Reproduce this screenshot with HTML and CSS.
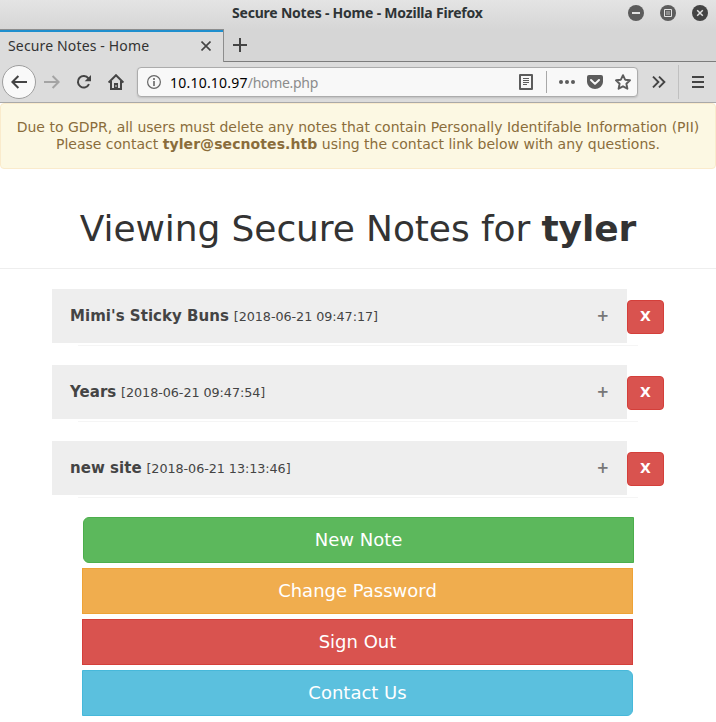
FILE: index.html
```html
<!DOCTYPE html>
<html lang="en">
<head>
<meta charset="utf-8">
<title>Secure Notes - Home</title>
<link rel="stylesheet" href="styles.css">
</head>
<body>
<header class="browser">
  <div class="titlebar">
    <span class="window-title">Secure Notes - Home - Mozilla Firefox</span>
    <div class="window-controls">
      <svg viewBox="0 0 16 16"><circle cx="8" cy="8" r="8" fill="#5c5c5c"/><path d="M4 8h8" stroke="#e2e2e2" stroke-width="2"/></svg>
      <svg viewBox="0 0 16 16"><circle cx="8" cy="8" r="8" fill="#5c5c5c"/><path d="M4.500 4.500h7v7h-7z" fill="none" stroke="#e2e2e2"/><path d="M6 6h4v4H6z" fill="#8b8b8b"/></svg>
      <svg viewBox="0 0 16 16"><circle cx="8" cy="8" r="8" fill="#444"/><path d="M5.200 5.200l5.600 5.600m0-5.600l-5.600 5.600" stroke="#e2e2e2" stroke-width="1.500"/></svg>
    </div>
  </div>
  <div class="tabs">
    <div class="tab">
      <span class="tab-title">Secure Notes - Home</span>
      <svg class="tab-close" viewBox="0 0 10 10"><path d="M.5.5l9 9m0-9l-9 9" fill="none" stroke="#444" stroke-width="1.600"/></svg>
    </div>
    <div class="tab-rest">
      <svg class="tab-new" viewBox="0 0 14 14"><path d="M7 0v14M0 7h14" stroke="#444" stroke-width="2"/></svg>
    </div>
  </div>
  <div class="toolbar">
    <div class="back"><svg class="icon" viewBox="0 0 16 16"><path d="M16 8H1.400M7.400 2L1.400 8l6 6" fill="none" stroke="#444" stroke-width="2"/></svg></div>
    <svg class="icon forward" viewBox="0 0 16 16"><path d="M0 8h14.600M8.600 2l6 6-6 6" fill="none" stroke="#a4a4a4" stroke-width="2"/></svg>
    <svg class="icon reload" viewBox="0 0 16 16"><path d="M13 10.200A5.800 5.800 0 1 1 12.400 4.300" fill="none" stroke="#444" stroke-width="2"/><path d="M15 1v6.300H8.700z" fill="#444"/></svg>
    <svg class="icon home" viewBox="0 0 16 16"><path d="M.6 8.500L8 1.200l7.400 7.300M3 7v8h10V7" fill="none" stroke="#444" stroke-width="2"/><path d="M6 15v-6h4v6" fill="#444"/><path d="M8 11v2" stroke="#ddd"/></svg>
    <div class="urlbar">
      <svg class="info" viewBox="0 0 14 14"><circle cx="7" cy="7" r="6.400" fill="none" stroke="#666" stroke-width="1.200"/><path d="M7 3v2M7 6v5" stroke="#666" stroke-width="1.600"/></svg>
      <span class="url">10.10.10.97<span class="path">/home.php</span></span>
      <svg class="icon reader" viewBox="0 0 16 16"><path d="M2 1h12v14H2z" fill="none" stroke="#5c5c5c" stroke-width="2" stroke-linejoin="round"/><path d="M5 4.500h6M5 6.500h6M5 8.500h6M5 10.500h4" stroke="#5c5c5c"/></svg>
      <i class="url-separator"></i>
      <svg class="icon dots" viewBox="0 0 16 16" fill="#5c5c5c"><circle cx="2" cy="8" r="2"/><circle cx="8" cy="8" r="2"/><circle cx="14" cy="8" r="2"/></svg>
      <svg class="icon pocket" viewBox="0 0 16 16"><path d="M2 1h12a2 2 0 0 1 2 2v4.500C16 12 12 15 8 15S0 12 0 7.500V3a2 2 0 0 1 2-2z" fill="#5c5c5c"/><path d="M4 6l4 3.900L12 6" fill="none" stroke="#f8f8f8" stroke-width="2" stroke-linecap="round" stroke-linejoin="round"/></svg>
      <svg class="icon star" viewBox="0 0 16 16"><path d="M8 1.200l2.100 4.500 4.900.6-3.600 3.400 1 5L8 12.300l-4.400 2.400 1-5L1 6.300l4.900-.6z" fill="none" stroke="#5c5c5c" stroke-width="1.900" stroke-linejoin="round"/></svg>
    </div>
    <svg class="overflow" viewBox="0 0 14 12"><path d="M1 .6L6.400 6 1 11.400M7 .6L12.400 6 7 11.400" fill="none" stroke="#444" stroke-width="1.900"/></svg>
    <i class="toolbar-separator"></i>
    <svg class="menu" viewBox="0 0 12 12"><path d="M0 1h12M0 6h12M0 11h12" stroke="#444" stroke-width="2"/></svg>
  </div>
</header>
<main>
  <div class="alert">Due to GDPR, all users must delete any notes that contain Personally Identifable Information (PII)<br>Please contact <strong>tyler@secnotes.htb</strong> using the contact link below with any questions.</div>
  <h1>Viewing Secure Notes for <b>tyler</b></h1>
  <section class="notes">
    <article class="note">
      <div class="note-row"><div class="accordion"><span><b>Mimi's Sticky Buns</b> <small>[2018-06-21 09:47:17]</small></span><span class="plus">+</span></div><button class="delete">X</button></div>
      <div class="rule"></div>
    </article>
    <article class="note">
      <div class="note-row"><div class="accordion"><span><b>Years</b> <small>[2018-06-21 09:47:54]</small></span><span class="plus">+</span></div><button class="delete">X</button></div>
      <div class="rule"></div>
    </article>
    <article class="note">
      <div class="note-row"><div class="accordion"><span><b>new site</b> <small>[2018-06-21 13:13:46]</small></span><span class="plus">+</span></div><button class="delete">X</button></div>
      <div class="rule"></div>
    </article>
  </section>
  <nav class="actions">
    <a class="btn success">New Note</a>
    <a class="btn warning">Change Password</a>
    <a class="btn danger">Sign Out</a>
    <a class="btn info-btn">Contact Us</a>
  </nav>
</main>
</body>
</html>
```
FILE: styles.css
```css
* { box-sizing: border-box; }
html, body { margin: 0; }
body {
  height: 722px;
  overflow: hidden;
  background: #fff;
  color: #333;
  font: 14px/17px "DejaVu Sans", sans-serif;
}
svg { display: block; flex: none; }

.browser {
  height: 103px;
  border-bottom: 1px solid #a9a9a9;
  background: linear-gradient(#e4e4e4, #d6d6d6 29px);
  font-family: "Noto Sans", sans-serif;
}
.titlebar {
  display: grid;
  grid-template-columns: 232px 1fr auto;
  align-items: center;
  height: 29px;
  padding-right: 8px;
}
.window-title {
  grid-column: 2;
  padding-bottom: 4px;
  color: #2e3436;
  font-size: 14px;
  font-weight: 700;
  letter-spacing: -0.21px;
  white-space: nowrap;
}
.window-controls { display: flex; gap: 16px; padding-bottom: 3px; }
.window-controls svg { width: 16px; height: 16px; }

.tabs { display: flex; height: 33px; }
.tab {
  display: flex;
  align-items: center;
  justify-content: space-between;
  width: 224px;
  padding: 0 12px 0 8px;
  border-top: 1px solid #8d8d8d;
  border-right: 1px solid #8d8d8d;
  background: linear-gradient(#1f8fce 2px, #dcdcdc 2px);
}
.tab-title { padding-bottom: 1px; color: #333; font-size: 14px; letter-spacing: 0.15px; }
.tab-close { width: 10px; height: 10px; }
.tab-rest { flex: 1; padding: 9px 0 0 9px; border-bottom: 1px solid #7d7d7d; }
.tab-new { width: 14px; height: 14px; }

.toolbar { display: flex; align-items: center; height: 40px; background: #dcdcdc; }
.icon { width: 16px; height: 16px; }
.back {
  display: grid;
  place-items: center;
  width: 34px;
  height: 34px;
  margin-left: 2px;
  border: 1px solid #9e9e9e;
  border-radius: 50%;
  background: #f9f9f9;
}
.forward { margin-left: 8px; }
.reload { margin-left: 16px; }
.home { margin-left: 16px; }
.urlbar {
  display: flex;
  align-items: center;
  width: 501px;
  height: 30px;
  margin-left: 13px;
  padding: 0 6px 0 9px;
  border: 1px solid #acacac;
  border-radius: 4px;
  background: #f8f8f8;
  box-shadow: 0 1px 2px #0002;
}
.info { width: 14px; height: 14px; }
.url { flex: 1; margin-left: 9px; color: #000; font-size: 14px; letter-spacing: 0.22px; white-space: nowrap; }
.path { color: #8c8c8c; letter-spacing: -0.3px; }
.url-separator { width: 1px; height: 22px; margin: 0 12px; background: #a8a8a8; }
.pocket, .star { margin-left: 12px; }
.overflow { width: 14px; height: 12px; margin-left: 14px; }
.toolbar-separator { width: 1px; height: 34px; margin: 0 13px 0 12px; background: #c0c0c0; }
.menu { width: 12px; height: 12px; }

.alert {
  height: 66px;
  padding: 15px 0;
  border: 1px solid #faebcc;
  border-radius: 4px;
  background: #fcf8e3;
  color: #8a6d3b;
  text-align: center;
  white-space: nowrap;
}
.alert strong { letter-spacing: 0.08px; }
h1 {
  height: 100px;
  margin: 0;
  padding-top: 40px;
  border-bottom: 1px solid #eee;
  font-size: 36px;
  font-weight: 400;
  letter-spacing: -0.1px;
  line-height: 40px;
  text-align: center;
}
.notes { padding: 20px 52px 0; }
.note { height: 76px; }
.note-row { display: flex; align-items: center; }
.accordion {
  display: flex;
  align-items: center;
  justify-content: space-between;
  width: 575px;
  height: 54px;
  padding: 0 18px;
  background: #eee;
  color: #444;
  font-size: 15px;
}
.accordion b { letter-spacing: 0.04px; }
small { font-size: 12.75px; letter-spacing: -0.06px; }
.plus { padding-top: 1px; color: #777; font-size: 15px; font-weight: 700; }
.delete {
  width: 37px;
  height: 34px;
  margin-top: 2px;
  padding: 0 0 2px;
  border: 1px solid #d43f3a;
  border-radius: 4px;
  background: #d9534f;
  color: #fff;
  font: 700 14px/20px "DejaVu Sans", sans-serif;
}
.rule { width: 560px; height: 1px; margin: 2px 0 0 26px; background: #f5f5f5; }
.actions { display: grid; gap: 5px; width: 551px; margin-left: 82px; }
.btn {
  height: 46px;
  border: 1px solid;
  color: #fff;
  font-size: 18px;
  line-height: 44px;
  text-align: center;
}
.success { margin: 0 -1px 0 1px; border-color: #4cae4c; border-radius: 6px 0 0 6px; background: #5cb85c; }
.warning { border-color: #eea236; background: #f0ad4e; }
.danger { border-color: #d43f3a; background: #d9534f; }
.info-btn { border-color: #46b8da; border-radius: 0 6px 6px 0; background: #5bc0de; }
```
